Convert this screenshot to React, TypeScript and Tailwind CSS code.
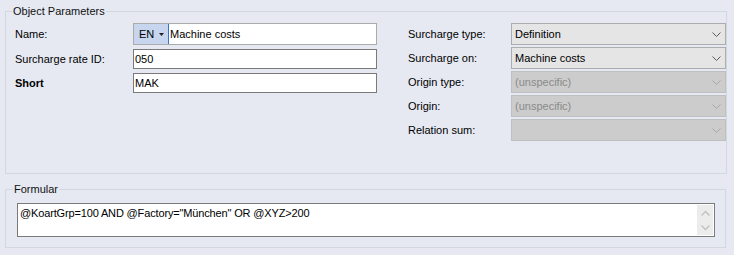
import React from "react";

const font = { fontFamily: '"Liberation Sans", Arial, sans-serif' };

function Chevron({ disabled }: { disabled?: boolean }) {
  return (
    <svg width="9" height="5" viewBox="0 0 9 5" className="shrink-0">
      <path
        d="M0.5 0.5 L4.5 4.5 L8.5 0.5"
        fill="none"
        stroke={disabled ? "#a8a8a8" : "#5a5a5a"}
        strokeWidth="1"
      />
    </svg>
  );
}

function Combo({ value, disabled }: { value?: string; disabled?: boolean }) {
  return (
    <div
      className={
        "flex h-[22px] w-[215px] items-center justify-between border pl-[3px] pr-[4px] " +
        (disabled
          ? "border-[#bfbfbf] bg-[#cccccc] text-[#8a8a8a]"
          : "border-[#adadad] bg-[#e5e5e5] text-black")
      }
    >
      <span className="leading-[14px]">{value ?? ""}</span>
      <Chevron disabled={disabled} />
    </div>
  );
}

function RightRow({ label, value, disabled }: { label: string; value?: string; disabled?: boolean }) {
  return (
    <div className="flex h-[22px] items-center">
      <div className="w-[103px] leading-[14px]">{label}</div>
      <Combo value={value} disabled={disabled} />
    </div>
  );
}

export default function App() {
  return (
    <div
      className="h-[255px] w-[734px] bg-[#e6e9f2] pl-[5px] pt-[4px] text-[11px] text-black"
      style={font}
    >
      <fieldset className="h-[170px] w-[721px] border border-[#d3d7de] pt-[5px]">
        <legend className="ml-[6px] px-[1px] leading-[14px] text-[#111]">Object Parameters</legend>
        <div className="flex">
          {/* left column */}
          <div className="flex flex-col gap-[4px] pl-[9px]">
            <div className="flex h-[22px] items-center">
              <div className="w-[118px] leading-[14px]">Name:</div>
              <div className="flex h-[22px] w-[244px] items-stretch border border-[#ababab] bg-white">
                <div className="flex w-[34px] items-center bg-[#c7d6ee] pl-[5px]">
                  <span className="leading-[14px]">EN</span>
                  <svg width="5" height="3" viewBox="0 0 5 3" className="ml-[5px]">
                    <path d="M0 0 H5 L2.5 3 Z" fill="#222" />
                  </svg>
                </div>
                <div className="w-[1px] bg-[#3b74c4]" />
                <div className="flex items-center pl-[1px] leading-[14px]">Machine costs</div>
              </div>
            </div>
            <div className="flex h-[20px] items-center">
              <div className="w-[118px] leading-[14px]">Surcharge rate ID:</div>
              <div className="flex h-[20px] w-[244px] items-center border border-[#7a7a7a] bg-white pl-[1px] leading-[14px]">
                050
              </div>
            </div>
            <div className="flex h-[20px] items-center">
              <div className="w-[118px] font-bold leading-[14px]">Short</div>
              <div className="flex h-[20px] w-[244px] items-center border border-[#7a7a7a] bg-white pl-[1px] leading-[14px]">
                MAK
              </div>
            </div>
          </div>
          {/* right column */}
          <div className="ml-[31px] flex flex-col gap-[2px]">
            <RightRow label="Surcharge type:" value="Definition" />
            <RightRow label="Surcharge on:" value="Machine costs" />
            <RightRow label="Origin type:" value="(unspecific)" disabled />
            <RightRow label="Origin:" value="(unspecific)" disabled />
            <RightRow label="Relation sum:" disabled />
          </div>
        </div>
      </fieldset>
      <fieldset className="mt-[8px] h-[66px] w-[721px] border border-[#d3d7de] pl-[11px] pt-[7px]">
        <legend className="ml-[-4px] px-[1px] leading-[14px] text-[#111]">Formular</legend>
        <div className="flex h-[34px] w-[698px] border border-[#7a7a7a] bg-white">
          <div className="flex-1 pl-[2px] pt-[2px] leading-[14px] tracking-[-0.15px]">
            @KoartGrp=100 AND @Factory=&quot;München&quot; OR @XYZ&gt;200
          </div>
          <div className="mb-[1px] mr-[1px] mt-[1px] flex w-[16px] flex-col items-center justify-around bg-[#ececec]">
            <svg width="9" height="6" viewBox="0 0 9 6">
              <path d="M0.5 5.5 L4.5 1.5 L8.5 5.5" fill="none" stroke="#c2c2c2" strokeWidth="1.4" />
            </svg>
            <svg width="9" height="6" viewBox="0 0 9 6">
              <path d="M0.5 0.5 L4.5 4.5 L8.5 0.5" fill="none" stroke="#c2c2c2" strokeWidth="1.4" />
            </svg>
          </div>
        </div>
      </fieldset>
    </div>
  );
}
